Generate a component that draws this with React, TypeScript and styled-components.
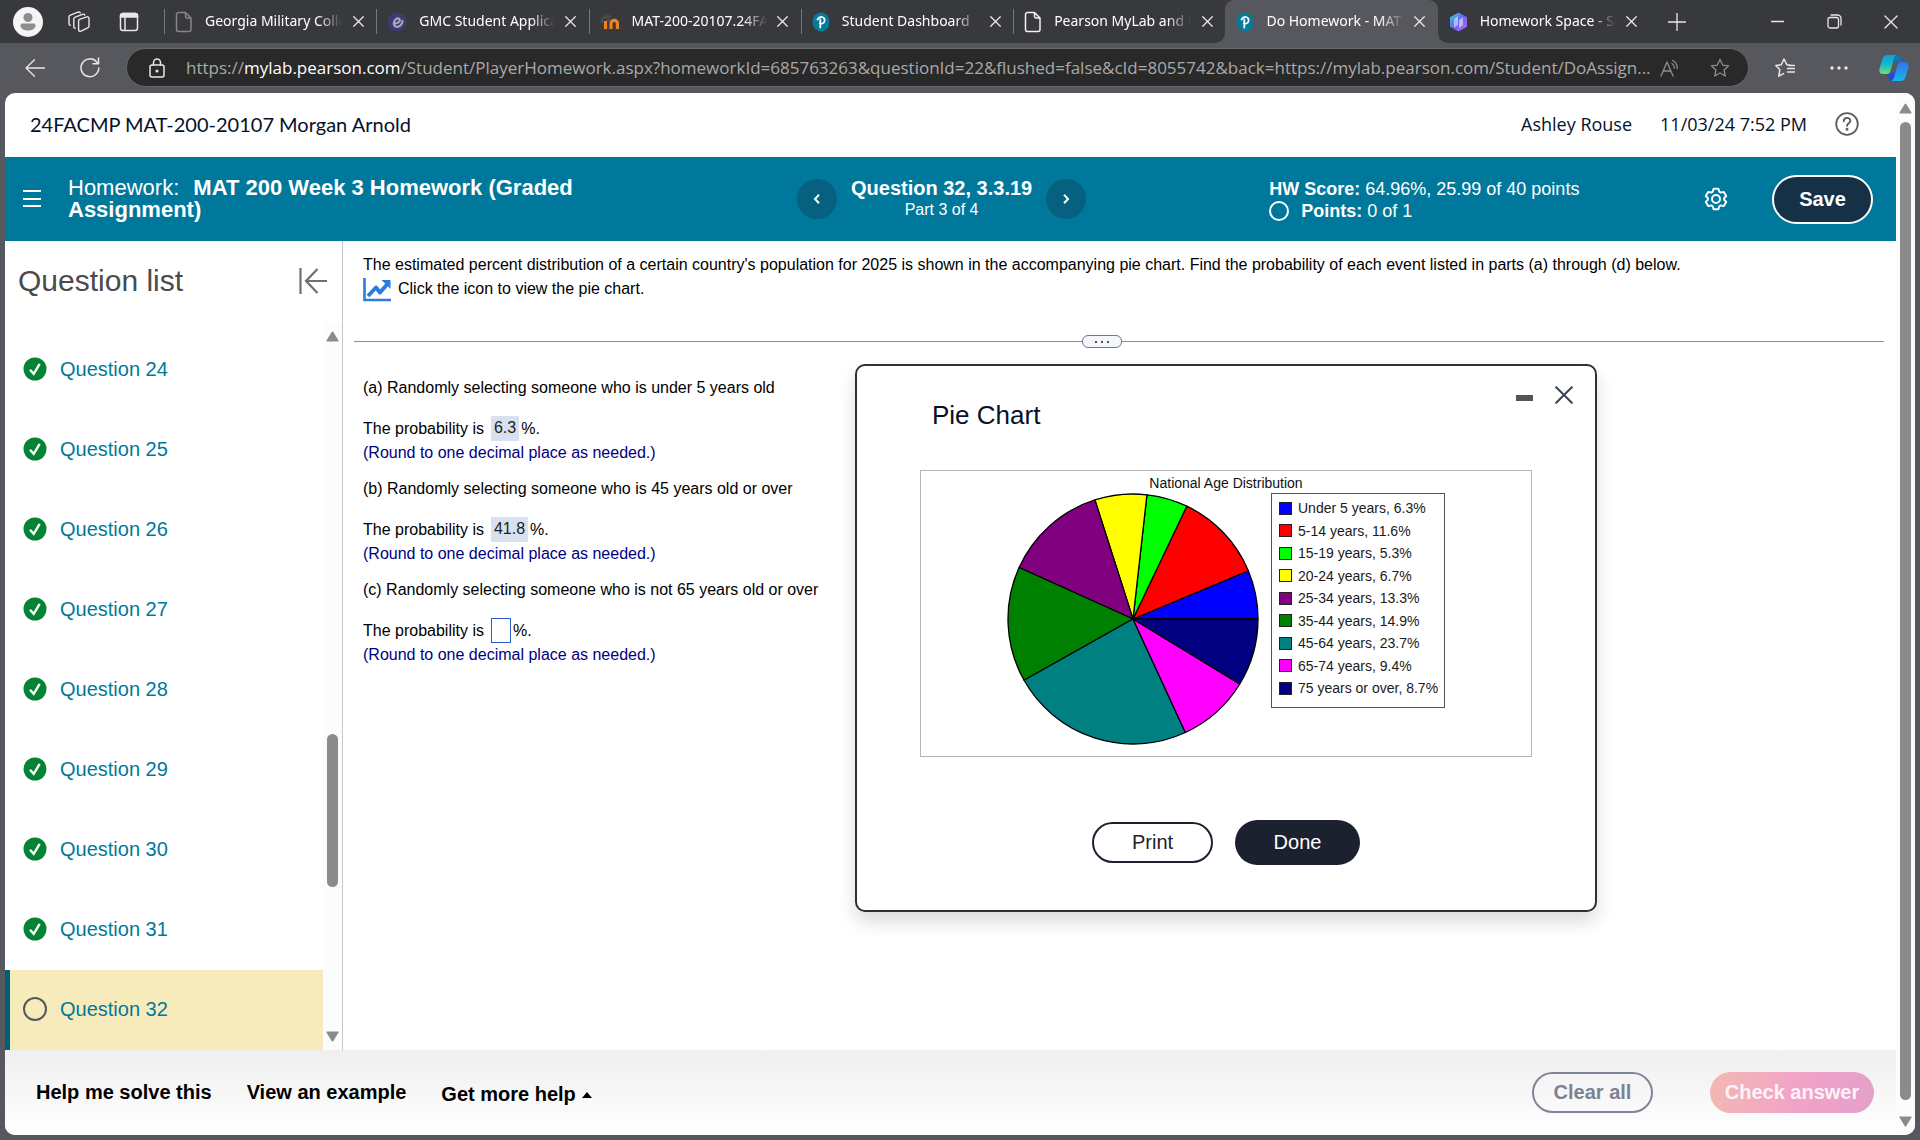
import React from "react";
import styled, { createGlobalStyle, css } from "styled-components";

const sans = `"Liberation Sans", Arial, sans-serif`;
const chromeFont = `"Noto Sans", "Open Sans", sans-serif`;
const textFont = `"Open Sans", "Noto Sans", sans-serif`;
const brandFont = `Lato, "Noto Sans", sans-serif`;

const GlobalStyle = createGlobalStyle`
  *, *::before, *::after { box-sizing: border-box; }
  html, body { margin: 0; background: #57585e; }
  body { font-family: ${sans}; color: #000; overflow: hidden; }
  button { font-family: inherit; border: 0; background: none; padding: 0; cursor: pointer; color: inherit; }
  a { text-decoration: none; color: inherit; }
  ul { list-style: none; margin: 0; padding: 0; }
  h1, h2, p { margin: 0; font-weight: 400; }
  svg { display: block; flex: none; }
`;

/* ---------- browser chrome ---------- */

const Browser = styled.div`
  display: flex;
  flex-direction: column;
  height: 100vh;
  background: #57585e;
  font-family: ${sans};
`;

const TabStrip = styled.header`
  display: flex;
  flex: none;
  height: 43px;
  background: #38393d;
  font-family: ${chromeFont};
  color: #fff;
`;

const TabActions = styled.div`
  display: flex;
  align-items: center;
  gap: 22px;
  width: 164px;
  padding-left: 13px;
`;

const IconButton = styled.button<{ $size?: number; $color?: string }>`
  display: flex;
  flex: none;
  align-items: center;
  justify-content: center;
  width: ${(p) => p.$size ?? 28}px;
  height: ${(p) => p.$size ?? 28}px;
  color: ${(p) => p.$color ?? "#e8e8e8"};
`;

const Tabs = styled.nav`
  display: flex;
  flex: 0 1 1486px;
  min-width: 0;
`;

const Tab = styled.div<{ $active?: boolean; $divider?: boolean }>`
  position: relative;
  display: flex;
  flex: 1 1 0;
  min-width: 0;
  align-items: center;
  padding: 0 8px 0 11px;
  ${(p) =>
    p.$divider &&
    css`
      &::before {
        content: "";
        position: absolute;
        left: 0;
        top: 9px;
        width: 1px;
        height: 25px;
        background: #77787c;
      }
    `}
  ${(p) =>
    p.$active &&
    css`
      background: #57585e;
      border-radius: 9px 9px 0 0;
      &::before,
      &::after {
        content: "";
        position: absolute;
        bottom: 0;
        width: 9px;
        height: 9px;
      }
      &::before {
        right: 100%;
        background: radial-gradient(circle at 0 0, transparent 8px, #57585e 9px);
      }
      &::after {
        left: 100%;
        background: radial-gradient(circle at 100% 0, transparent 8px, #57585e 9px);
      }
    `}
`;

const TabTitle = styled.a`
  flex: 1;
  min-width: 0;
  margin: 0 6px 0 12px;
  padding-bottom: 2px;
  overflow: hidden;
  white-space: nowrap;
  font-size: 14px;
  line-height: 24px;
  mask-image: linear-gradient(to right, #000 calc(100% - 24px), transparent);
`;

const WindowControls = styled.div`
  display: flex;
  flex: 1;
  align-items: center;
  padding: 0 15px 0 13px;
`;

const Spacer = styled.span`
  flex: 1;
`;

const ControlGroup = styled.div`
  display: flex;
  gap: 29px;
`;

const Toolbar = styled.div`
  display: flex;
  flex: none;
  align-items: center;
  height: 50px;
  padding: 0 11px 1px 21px;
  font-family: ${textFont};
`;

const NavButtons = styled.div`
  display: flex;
  gap: 27px;
  width: 105px;
`;

const AddressBar = styled.div`
  display: flex;
  flex: 1;
  min-width: 0;
  align-items: center;
  height: 39px;
  padding: 0 14px 0 16px;
  border: 1px solid #66676b;
  border-radius: 20px;
  background: #292929;
`;

const Url = styled.a`
  flex: 1;
  min-width: 0;
  margin-left: 15px;
  overflow: hidden;
  white-space: nowrap;
  font-size: 17px;
  line-height: 26px;
  color: #a9a9a9;
  b {
    font-weight: 400;
    color: #fff;
  }
`;

const AddressActions = styled.div`
  display: flex;
  gap: 22px;
`;

const ToolbarActions = styled.div`
  display: flex;
  align-items: center;
  gap: 26px;
  margin-left: 22px;
`;

/* ---------- page ---------- */

const Viewport = styled.div`
  display: flex;
  flex: 1;
  min-height: 0;
  margin: 0 5px 5px;
  overflow: hidden;
  border-radius: 10px;
  background: #fff;
`;

const Page = styled.div`
  display: flex;
  flex: 1;
  flex-direction: column;
  min-width: 0;
`;

const ScrollTrack = styled.div<{ $wide?: boolean }>`
  display: flex;
  flex: none;
  flex-direction: column;
  align-items: center;
  width: 19px;
  padding: ${(p) => (p.$wide ? "10px 0 8px" : "9px 0 8px")};
  background: #fcfcfc;
`;

const Thumb = styled.div<{ $before: number; $size: number; $after: number }>`
  display: flex;
  flex: 1;
  flex-direction: column;
  &::before {
    content: "";
    flex: ${(p) => p.$before};
  }
  &::after {
    content: "";
    flex: ${(p) => p.$after};
  }
  span {
    flex: ${(p) => p.$size};
    width: 11px;
    border-radius: 6px;
    background: #8b8b8b;
  }
`;

const CourseBar = styled.div`
  display: flex;
  flex: none;
  align-items: center;
  height: 64px;
  padding: 0 37px 2px 25px;
  font-family: ${brandFont};
  font-size: 20px;
  color: #05112a;
`;

const CourseMeta = styled.div`
  display: flex;
  align-items: center;
  gap: 28px;
  margin-left: auto;
  font-family: ${textFont};
  font-size: 18px;
`;

const Banner = styled.div`
  display: flex;
  flex: none;
  align-items: center;
  height: 84px;
  padding: 0 23px 0 18px;
  background: #00789b;
  color: #fff;
`;

const BannerTitle = styled.h1`
  width: 540px;
  margin: 0 0 0 27px;
  font-size: 22px;
  line-height: 22px;
  b {
    margin-left: 8px;
  }
`;

const Pager = styled.div`
  display: flex;
  align-items: center;
  gap: 14px;
  margin-left: 189px;
`;

const PagerButton = styled.button`
  display: flex;
  align-items: center;
  justify-content: center;
  width: 40px;
  height: 40px;
  border-radius: 50%;
  background: #06607f;
`;

const PagerLabel = styled.div`
  text-align: center;
  font-size: 16px;
  line-height: 22px;
  strong {
    display: block;
    font-size: 20px;
  }
`;

const Scores = styled.div`
  margin-left: 183px;
  padding-top: 2px;
  font-size: 18px;
  line-height: 22px;
  white-space: nowrap;
`;

const PointsRow = styled.div`
  display: flex;
  align-items: center;
  gap: 12px;
`;

const Ring = styled.span<{ $size: number; $color: string }>`
  flex: none;
  width: ${(p) => p.$size}px;
  height: ${(p) => p.$size}px;
  border: 2px solid ${(p) => p.$color};
  border-radius: 50%;
`;

const BannerActions = styled.div`
  display: flex;
  align-items: center;
  gap: 42px;
  margin-left: auto;
`;

const SaveButton = styled.button`
  width: 101px;
  height: 49px;
  border: 2px solid #fff;
  border-radius: 25px;
  background: #163145;
  font-size: 20px;
  font-weight: 700;
  color: #fff;
`;

const Body = styled.div`
  display: flex;
  flex: 1;
  min-height: 0;
`;

const Sidebar = styled.aside`
  display: flex;
  flex: none;
  flex-direction: column;
  width: 338px;
  border-right: 1px solid #c7c7d2;
`;

const SidebarHead = styled.div`
  display: flex;
  flex: none;
  align-items: center;
  justify-content: space-between;
  height: 81px;
  padding: 0 15px 2px 13px;
  h2 {
    font-size: 30px;
    color: #4b4b4b;
  }
`;

const SidebarBody = styled.div`
  display: flex;
  flex: 1;
  min-height: 0;
`;

const QuestionList = styled.ul`
  flex: 1;
  overflow: hidden;
  padding-top: 8px;
`;

const QuestionItem = styled.li<{ $current?: boolean }>`
  border-left: 5px solid ${(p) => (p.$current ? "#006078" : "transparent")};
  background: ${(p) => (p.$current ? "#f8ebbb" : "transparent")};
`;

const QuestionLink = styled.a`
  display: flex;
  align-items: center;
  gap: 13px;
  height: 80px;
  padding: 0 0 2px 13px;
  font-size: 20px;
  color: #00789b;
`;

const Main = styled.main`
  position: relative;
  flex: 1;
  min-width: 0;
  padding: 12px 12px 0 11px;
`;

const Prompt = styled.section`
  height: 82px;
  padding-left: 9px;
  font-size: 16px;
  line-height: 24px;
`;

const ChartLink = styled.button`
  display: flex;
  gap: 7px;
  font-size: 16px;
  line-height: 24px;
`;

const Divider = styled.div`
  display: flex;
  align-items: center;
  height: 13px;
  &::before,
  &::after {
    content: "";
    height: 1px;
    background: #8490a4;
  }
  &::before {
    flex: 728;
  }
  &::after {
    flex: 762;
  }
`;

const Grip = styled.button`
  display: flex;
  align-items: center;
  justify-content: center;
  gap: 4px;
  width: 40px;
  height: 13px;
  border: 1px solid #6a7a8f;
  border-radius: 6px;
  background: #f4f6f9;
  span {
    width: 2px;
    height: 2px;
    background: #4a5568;
  }
`;

const Parts = styled.section`
  display: flex;
  flex-direction: column;
  gap: 12px;
  padding: 28px 0 0 9px;
  font-size: 16px;
  line-height: 24px;
`;

const AnswerRow = styled.div`
  display: flex;
  align-items: center;
  height: 25px;
  margin-top: 16px;
`;

const Answered = styled.output`
  height: 25px;
  margin: 0 2px 0 7px;
  padding: 0 3px;
  background: #d7e1f0;
  line-height: 24px;
  color: #1d1d1d;
`;

const AnswerInput = styled.input`
  width: 20px;
  height: 25px;
  margin: 0 2px 0 7px;
  padding: 0;
  border: 1px solid #2a5fc8;
  background: #fff;
  font: 16px ${sans};
`;

const Hint = styled.p`
  color: #00007f;
`;

/* ---------- dialog ---------- */

const Dialog = styled.section`
  position: absolute;
  left: 512px;
  top: 123px;
  display: flex;
  flex-direction: column;
  width: 742px;
  height: 548px;
  padding: 19px 63px 45px 63px;
  border: 2px solid #2f3133;
  border-radius: 10px;
  background: #fff;
  box-shadow: 0 10px 18px rgba(0, 0, 0, 0.14);
`;

const DialogHead = styled.div`
  display: flex;
  justify-content: space-between;
  height: 85px;
  margin-right: -42px;
  padding-left: 12px;
  h2 {
    margin-top: 15px;
    font-size: 26px;
    line-height: 30px;
    color: #05112a;
  }
`;

const DialogControls = styled.div`
  display: flex;
  gap: 20px;
  button {
    width: 20px;
    height: 20px;
  }
`;

const ChartFrame = styled.figure`
  flex: none;
  height: 287px;
  margin: 0;
  border: 1px solid #b4b4b4;
  font-size: 14px;
  figcaption {
    padding-top: 2px;
    text-align: center;
    line-height: 20px;
    color: #111;
  }
`;

const ChartBody = styled.div`
  display: flex;
  align-items: flex-start;
  gap: 12px;
  padding-left: 86px;
`;

const Legend = styled.ul`
  display: flex;
  flex-direction: column;
  justify-content: space-between;
  width: 174px;
  height: 215px;
  padding: 5px 0 10px 7px;
  border: 1px solid #555;
`;

const LegendItem = styled.li`
  display: flex;
  align-items: center;
  gap: 6px;
  height: 18px;
  line-height: 18px;
  white-space: nowrap;
  color: #1a1a1a;
`;

const Swatch = styled.span<{ $color: string }>`
  width: 13px;
  height: 13px;
  border: 1px solid #222;
  background: ${(p) => p.$color};
`;

const DialogActions = styled.div`
  display: flex;
  align-items: center;
  justify-content: center;
  gap: 22px;
  margin-top: auto;
`;

const PrintButton = styled.button`
  width: 121px;
  height: 41px;
  border: 2px solid #1b212e;
  border-radius: 21px;
  font-size: 20px;
  color: #1b212e;
`;

const DoneButton = styled.button`
  width: 125px;
  height: 45px;
  border-radius: 23px;
  background: #1b212e;
  font-size: 20px;
  color: #fff;
`;

/* ---------- footer ---------- */

const Footer = styled.footer`
  display: flex;
  flex: none;
  align-items: center;
  gap: 35px;
  height: 85px;
  padding: 0 22px 0 31px;
  background: linear-gradient(#efefef, #fff);
  button {
    font-size: 20px;
    font-weight: 700;
  }
`;

const HelpMenu = styled.button`
  display: flex;
  align-items: center;
  gap: 6px;
  padding-top: 4px;
`;

const FooterActions = styled.div`
  display: flex;
  gap: 57px;
  margin-left: auto;
`;

const ClearButton = styled.button`
  width: 121px;
  height: 41px;
  border: 2px solid #7f8796;
  border-radius: 21px;
  color: #7b8392;
`;

const CheckButton = styled.button`
  width: 164px;
  height: 41px;
  border-radius: 21px;
  background: linear-gradient(100deg, #f4b8b2, #f0a2c8 58%, #e4a0ca);
  color: #fdf3f8;
`;

/* ---------- icons ---------- */

const line = {
  fill: "none",
  stroke: "currentColor",
  strokeWidth: 1.3,
  strokeLinecap: "round" as const,
  strokeLinejoin: "round" as const,
};

const CloseIcon = ({ size = 12, width = 1.4 }) => (
  <svg width={size} height={size} viewBox="0 0 12 12" {...line} strokeWidth={width}>
    <path d="M.8.8 11.2 11.2M11.2.8.8 11.2" />
  </svg>
);

const FileIcon = ({ color }: { color: string }) => (
  <svg width="18" height="22" viewBox="0 0 18 22" {...line} stroke={color} strokeWidth={1.5}>
    <path d="M3.5 1.5h7L16 7v11.500a2 2 0 0 1-2 2H3.500a2 2 0 0 1-2-2v-15a2 2 0 0 1 2-2ZM10.500 1.500V5.500A1.500 1.500 0 0 0 12 7h4" />
  </svg>
);

const PearsonIcon = () => (
  <svg width="18" height="20" viewBox="0 0 18 20">
    <ellipse cx="9" cy="10" rx="8.500" ry="9.500" fill="#047a9c" />
    <path
      d="M5.500 7.600C6.500 5.300 9 4.400 10.800 5.200c2.800 1.300 2.300 5.300-.4 6.300-1 .4-2 .3-2.600-.1M8.300 7.300v8.200"
      fill="none"
      stroke="#fff"
      strokeWidth="1.800"
      strokeLinecap="round"
    />
  </svg>
);

const SwirlIcon = () => (
  <svg width="20" height="20" viewBox="0 0 20 20">
    <circle cx="10" cy="10" r="9.500" fill="#3c3b72" />
    <path
      d="M8.500 11.300c2 .2 4.300-1.300 4.300-3.300 0-1.800-2.300-2.300-4-.8-2.800 2.400-2.600 6.800.2 7.500 3.200.7 6.300-2 6.500-5.700"
      fill="none"
      stroke="#a9a6b9"
      strokeWidth="2.200"
      strokeLinecap="round"
    />
  </svg>
);

const MoodleIcon = () => (
  <svg width="20" height="18" viewBox="0 0 20 18" fill="none">
    <path d="M1 4.500 8 1.500l4 2-6 2.500Z" fill="#4d4a48" />
    <path d="M2 5v5" stroke="#6b5a4a" strokeWidth="1.200" />
    <path d="M5.500 16V8M11 16v-5.500a3.200 3.200 0 0 1 6.400 0V16" stroke="#ef8022" strokeWidth="3.200" />
    <path d="M6.500 7.500c1.400-1 2.600-.8 3.400.4" stroke="#7a4a28" strokeWidth="1.600" />
  </svg>
);

const HexIcon = () => (
  <svg width="19" height="20" viewBox="0 0 19 20">
    <defs>
      <linearGradient id="hex" x1="0" y1="0" x2="1" y2="1">
        <stop offset="0" stopColor="#35d3e6" />
        <stop offset=".5" stopColor="#6a62ee" />
        <stop offset="1" stopColor="#c56bf5" />
      </linearGradient>
    </defs>
    <path d="M9.500.5 18 5.200v9.600l-8.500 4.700L1 14.800V5.200Z" fill="url(#hex)" />
    <path d="m5 7 4-3v9l-4 2.500ZM10 8l4-3v8l-4 3Z" fill="#c9d6ff" fillOpacity=".75" />
  </svg>
);

const ProfileIcon = () => (
  <svg width="30" height="30" viewBox="0 0 30 30">
    <circle cx="15" cy="15" r="15" fill="#f5f5f5" />
    <circle cx="15" cy="10.500" r="4.500" fill="#8d8d8d" />
    <path d="M9.500 16.500h11a2 2 0 0 1 2 2c0 3-3.500 5-7.500 5s-7.500-2-7.500-5a2 2 0 0 1 2-2Z" fill="#8d8d8d" />
  </svg>
);

const WorkspacesIcon = () => (
  <svg width="22" height="22" viewBox="0 0 22 22" {...line} strokeWidth={1.4}>
    <path d="m11.500 8.300 7.200-2.500a1.700 1.700 0 0 1 2.300 1.600v7.600c0 .9-.5 1.500-1.300 1.800l-6.700 3.400a1.700 1.700 0 0 1-2.400-1.500v-8.700c0-.8.2-1.400.9-1.700Z" />
    <path d="M7.200 17.300c-1-.1-1.400-.7-1.400-1.500V8c0-.9.5-1.500 1.300-1.800l7.500-2.900c.9-.3 1.800 0 2.200.8" />
    <path d="M2.200 14.300c-.8-.2-1.200-.7-1.200-1.500V6c0-.9.500-1.500 1.300-1.800l7.800-3c.9-.3 1.700 0 2.100.7" />
  </svg>
);

const TabMenuIcon = () => (
  <svg width="20" height="20" viewBox="0 0 20 20" {...line} strokeWidth={1.5}>
    <rect x="1.500" y="1.500" width="17" height="17" rx="2.500" />
    <path d="M1.500 4a2.500 2.500 0 0 1 2.500-2.500h12A2.500 2.500 0 0 1 18.500 4v1h-17Z" fill="currentColor" />
    <path d="M6 6v12" />
  </svg>
);

const RestoreIcon = () => (
  <svg width="15" height="15" viewBox="0 0 15 15" {...line}>
    <rect x="1" y="3.500" width="10.500" height="10.500" rx="2" />
    <path d="M4 1h6.500A3.500 3.500 0 0 1 14 4.500V11" />
  </svg>
);

const StarPath = "m10 1.500 2.600 5.600 6 .7-4.500 4.200 1.200 6-5.300-3-5.300 3 1.200-6L1.400 7.800l6-.7Z";

const CopilotIcon = () => (
  <svg width="30" height="28" viewBox="0 0 30 28">
    <defs>
      <linearGradient id="cpA" x1="0" y1="0" x2="0" y2="1">
        <stop offset="0" stopColor="#0f9fe0" />
        <stop offset=".5" stopColor="#19b8c4" />
        <stop offset="1" stopColor="#6fe07c" />
      </linearGradient>
      <linearGradient id="cpB" x1="0" y1="0" x2="0" y2="1">
        <stop offset="0" stopColor="#2f74e8" />
        <stop offset="1" stopColor="#17b5ee" />
      </linearGradient>
    </defs>
    <path d="M14 1h5c2.500 0 3 2 3.500 4l.8 2.500H19c-2 0-3 1-3.500 3Z" fill="#0a78b4" />
    <path d="M8 20h6l3-4-1.500 9c-.4 1.400-1.300 2-2.500 2-2 0-2.700-1.500-3.200-3.500Z" fill="#2547dd" />
    <path d="M8.500 1H18c-2 .5-2.600 2-3.200 4l-3.300 12c-.6 2-1.700 3-3.700 3H4c-3 0-4.300-2-3.500-5.500L3.500 5C4.200 2.400 5.800 1 8.500 1Z" fill="url(#cpA)" />
    <path d="M21.500 27H12c2-.5 2.600-2 3.200-4l3.300-12c.6-2 1.700-3 3.700-3H26c3 0 4.300 2 3.500 5.500L26.500 23c-.7 2.600-2.300 4-5 4Z" fill="url(#cpB)" />
  </svg>
);

const Arrow = ({ down = false }) => (
  <svg width="13" height="11" viewBox="0 0 13 11" fill="#8b8b8b">
    <path d={down ? "M1 .5h11q1 0 .5 1L7.300 10q-.8 1-1.600 0L.5 1.500Q0 .5 1 .5Z" : "M1 10.500h11q1 0 .5-1L7.300 1q-.8-1-1.600 0L.5 9.500q-.5 1 .5 1Z"} />
  </svg>
);

const CheckIcon = () => (
  <svg width="24" height="24" viewBox="0 0 24 24">
    <circle cx="12" cy="12" r="11.500" fill="#048236" />
    <path d="m7 12.800 3.700 4 6-10" fill="none" stroke="#fff" strokeWidth="2.400" />
  </svg>
);

const GearIcon = () => (
  <svg width="24" height="24" viewBox="0 0 24 24" fill="none" stroke="#fff" strokeWidth="2" strokeLinejoin="round">
    <path d="M9.600 1.800h4.800l.9 2.900 1.500.9 3-.7 2.400 4.100-2.100 2.200v1.600l2.100 2.200-2.400 4.100-3-.7-1.500.9-.9 2.900H9.600l-.9-2.900-1.500-.9-3 .7L1.800 15l2.100-2.200v-1.600L1.800 9l2.400-4.100 3 .7 1.500-.9Z" />
    <circle cx="12" cy="12" r="4" />
  </svg>
);

const ChartIcon = () => (
  <svg width="28" height="25" viewBox="0 0 28 25">
    <path d="M1.500 1v22H28" fill="none" stroke="#2c7be0" strokeWidth="2.600" />
    <path d="m5 19 8-8.500 4 5 7-8" fill="none" stroke="#2c7be0" strokeWidth="4" strokeLinejoin="round" />
    <path d="M18.500 3H27.500V12Z" fill="#2c7be0" />
  </svg>
);

/* ---------- data ---------- */

type TabInfo = { title: string; icon: React.ReactNode; active?: boolean; divider?: boolean };

const tabs: TabInfo[] = [
  { title: "Georgia Military College", icon: <FileIcon color="#85868a" />, divider: true },
  { title: "GMC Student Application", icon: <SwirlIcon />, divider: true },
  { title: "MAT-200-20107.24FACMP", icon: <MoodleIcon />, divider: true },
  { title: "Student Dashboard", icon: <PearsonIcon />, divider: true },
  { title: "Pearson MyLab and Mastering", icon: <FileIcon color="#f2f2f2" />, divider: true },
  { title: "Do Homework - MAT 200", icon: <PearsonIcon />, active: true },
  { title: "Homework Space - Study", icon: <HexIcon /> },
];

const questions = [24, 25, 26, 27, 28, 29, 30, 31, 32];

const slices = [
  { label: "Under 5 years", value: 6.3, color: "#0000ff" },
  { label: "5-14 years", value: 11.6, color: "#ff0000" },
  { label: "15-19 years", value: 5.3, color: "#00ff00" },
  { label: "20-24 years", value: 6.7, color: "#ffff00" },
  { label: "25-34 years", value: 13.3, color: "#800080" },
  { label: "35-44 years", value: 14.9, color: "#008000" },
  { label: "45-64 years", value: 23.7, color: "#008080" },
  { label: "65-74 years", value: 9.4, color: "#ff00ff" },
  { label: "75 years or over", value: 8.7, color: "#000080" },
];

const parts = [
  { id: "a", text: "(a) Randomly selecting someone who is under 5 years old", answer: "6.3" },
  { id: "b", text: "(b) Randomly selecting someone who is 45 years old or over", answer: "41.8" },
  { id: "c", text: "(c) Randomly selecting someone who is not 65 years old or over", answer: "" },
];

function Pie() {
  const c = 126;
  const r = 125;
  const total = slices.reduce((sum, s) => sum + s.value, 0);
  const point = (t: number) => {
    const a = (t / total) * Math.PI * 2;
    return `${c + r * Math.cos(a)} ${c - r * Math.sin(a)}`;
  };
  let start = 0;
  return (
    <svg width="252" height="252" viewBox="0 0 252 252" role="img" aria-label="National Age Distribution">
      {slices.map((s) => {
        const from = start;
        start += s.value;
        return (
          <path
            key={s.label}
            d={`M${c} ${c}L${point(from)}A${r} ${r} 0 0 0 ${point(start)}Z`}
            fill={s.color}
            stroke="#000"
            strokeWidth="1.300"
            strokeLinejoin="round"
          />
        );
      })}
    </svg>
  );
}

export default function App() {
  return (
    <Browser>
      <GlobalStyle />
      <TabStrip>
        <TabActions>
          <IconButton $size={30} aria-label="Profile"><ProfileIcon /></IconButton>
          <IconButton aria-label="Workspaces"><WorkspacesIcon /></IconButton>
          <IconButton aria-label="Tab actions"><TabMenuIcon /></IconButton>
        </TabActions>
        <Tabs>
          {tabs.map((t) => (
            <Tab key={t.title} $active={t.active} $divider={t.divider}>
              {t.icon}
              <TabTitle href="#">{t.title}</TabTitle>
              <IconButton $size={20} aria-label="Close tab"><CloseIcon size={11} /></IconButton>
            </Tab>
          ))}
        </Tabs>
        <WindowControls>
          <IconButton aria-label="New tab">
            <svg width="18" height="18" viewBox="0 0 18 18" {...line}><path d="M9 .5v17M.5 9h17" /></svg>
          </IconButton>
          <Spacer />
          <ControlGroup>
            <IconButton aria-label="Minimize">
              <svg width="13" height="13" viewBox="0 0 13 13" {...line}><path d="M.5 6.500h12" /></svg>
            </IconButton>
            <IconButton aria-label="Restore"><RestoreIcon /></IconButton>
            <IconButton aria-label="Close"><CloseIcon size={14} width={1.1} /></IconButton>
          </ControlGroup>
        </WindowControls>
      </TabStrip>

      <Toolbar>
        <NavButtons>
          <IconButton aria-label="Back">
            <svg width="20" height="18" viewBox="0 0 20 18" {...line}><path d="M9.500.8 1 9l8.500 8.200M1 9h18.500" /></svg>
          </IconButton>
          <IconButton aria-label="Refresh">
            <svg width="20" height="21" viewBox="0 0 20 21" {...line} strokeWidth={1.5}>
              <path d="M18.800 11A8.900 8.900 0 1 1 16.500 4.800L18 6.500M18.500 1v5.700h-5.500" />
            </svg>
          </IconButton>
        </NavButtons>
        <AddressBar>
          <IconButton aria-label="Site information">
            <svg width="16" height="20" viewBox="0 0 16 20" {...line} strokeWidth={1.5}>
              <rect x="1" y="7" width="14" height="12" rx="2" />
              <path d="M4.500 7V4.500a3.500 3.500 0 0 1 7 0V7" />
              <circle cx="8" cy="13" r=".8" fill="currentColor" />
            </svg>
          </IconButton>
          <Url href="#">
            https://<b>mylab.pearson.com</b>/Student/PlayerHomework.aspx?homeworkId=685763263&amp;questionId=22&amp;flushed=false&amp;cId=8055742&amp;back=https://mylab.pearson.com/Student/DoAssign...
          </Url>
          <AddressActions>
            <IconButton $color="#8f8f8f" aria-label="Read aloud">
              <svg width="20" height="18" viewBox="0 0 20 18" {...line}>
                <path d="m1 17 6-14 6 14M3.200 12h7.600M12 4.500c1.600 1 2.300 2.400 2.300 4.500M12.500 1.500c3.200 1.200 4.800 4 4.700 8" />
              </svg>
            </IconButton>
            <IconButton $color="#8f8f8f" aria-label="Add to favorites">
              <svg width="20" height="20" viewBox="0 0 20 20" {...line}><path d={StarPath} /></svg>
            </IconButton>
          </AddressActions>
        </AddressBar>
        <ToolbarActions>
          <IconButton aria-label="Favorites">
            <svg width="20" height="20" viewBox="0 0 20 20" {...line} strokeWidth={1.5}>
              <path d="M16 7.200 11.800 6.700 9 1 6.300 6.700l-5.500.8 4 4-1 6.700 4.700-2.600M12.500 10.500h7M12.500 14h7M14 7.500h5.500" />
            </svg>
          </IconButton>
          <IconButton aria-label="Settings and more">
            <svg width="18" height="4" viewBox="0 0 18 4" fill="currentColor">
              <circle cx="2" cy="2" r="1.700" /><circle cx="9" cy="2" r="1.700" /><circle cx="16" cy="2" r="1.700" />
            </svg>
          </IconButton>
          <IconButton $size={30} aria-label="Copilot"><CopilotIcon /></IconButton>
        </ToolbarActions>
      </Toolbar>

      <Viewport>
        <Page>
          <CourseBar>
            <span>24FACMP MAT-200-20107 Morgan Arnold</span>
            <CourseMeta>
              <span>Ashley Rouse</span>
              <span>11/03/24 7:52 PM</span>
              <IconButton $size={24} $color="#5c5c5c" aria-label="Help">
                <svg width="24" height="24" viewBox="0 0 24 24" {...line} strokeWidth={1.8}>
                  <circle cx="12" cy="12" r="10.800" />
                  <path d="M8.700 9.300c0-4.500 6.900-4.300 6.700-.4-.1 2.400-3.300 2.400-3.400 5" />
                  <circle cx="12" cy="17.300" r=".6" fill="currentColor" />
                </svg>
              </IconButton>
            </CourseMeta>
          </CourseBar>

          <Banner>
            <IconButton $size={18} $color="#fff" aria-label="Menu">
              <svg width="18" height="18" viewBox="0 0 18 18" fill="currentColor">
                <path d="M0 0h18v2H0zM0 8h18v2H0zM0 15h18v2H0z" />
              </svg>
            </IconButton>
            <BannerTitle>Homework: <b>MAT 200 Week 3 Homework (Graded Assignment)</b></BannerTitle>
            <Pager>
              <PagerButton aria-label="Previous question">
                <svg width="8" height="10" viewBox="0 0 8 10" fill="none" stroke="#fff" strokeWidth="2"><path d="M6 .8 2 5l4 4.200" /></svg>
              </PagerButton>
              <PagerLabel><strong>Question 32, 3.3.19</strong>Part 3 of 4</PagerLabel>
              <PagerButton aria-label="Next question">
                <svg width="8" height="10" viewBox="0 0 8 10" fill="none" stroke="#fff" strokeWidth="2"><path d="m2 .8 4 4.200-4 4.200" /></svg>
              </PagerButton>
            </Pager>
            <Scores>
              <div><b>HW Score:</b> 64.96%, 25.99 of 40 points</div>
              <PointsRow><Ring $size={20} $color="#fff" /><span><b>Points:</b> 0 of 1</span></PointsRow>
            </Scores>
            <BannerActions>
              <IconButton aria-label="Settings"><GearIcon /></IconButton>
              <SaveButton>Save</SaveButton>
            </BannerActions>
          </Banner>

          <Body>
            <Sidebar>
              <SidebarHead>
                <h2>Question list</h2>
                <IconButton $color="#6f6f6f" aria-label="Collapse question list">
                  <svg width="28" height="26" viewBox="0 0 28 26" fill="none" stroke="currentColor" strokeWidth="2.200">
                    <path d="M1.500 0v26M18.500 1 7 13l11.500 12M7 13h21" />
                  </svg>
                </IconButton>
              </SidebarHead>
              <SidebarBody>
                <QuestionList>
                  {questions.map((n) => (
                    <QuestionItem key={n} $current={n === 32}>
                      <QuestionLink href="#">
                        {n === 32 ? <Ring $size={24} $color="#54595f" /> : <CheckIcon />}
                        Question {n}
                      </QuestionLink>
                    </QuestionItem>
                  ))}
                </QuestionList>
                <ScrollTrack>
                  <Arrow />
                  <Thumb $before={391} $size={153} $after={144}><span /></Thumb>
                  <Arrow down />
                </ScrollTrack>
              </SidebarBody>
            </Sidebar>

            <Main>
              <Prompt>
                <p>
                  The estimated percent distribution of a certain country's population for 2025 is shown in the accompanying pie chart. Find the probability of each event listed in parts (a) through (d) below.
                </p>
                <ChartLink><ChartIcon />Click the icon to view the pie chart.</ChartLink>
              </Prompt>
              <Divider>
                <Grip aria-label="Resize panels"><span /><span /><span /></Grip>
              </Divider>
              <Parts>
                {parts.map((p) => (
                  <div key={p.id}>
                    <p>{p.text}</p>
                    <AnswerRow>
                      <label htmlFor={`answer-${p.id}`}>The probability is</label>
                      {p.answer ? <Answered id={`answer-${p.id}`}>{p.answer}</Answered> : <AnswerInput id={`answer-${p.id}`} />}
                      <span>%.</span>
                    </AnswerRow>
                    <Hint>(Round to one decimal place as needed.)</Hint>
                  </div>
                ))}
              </Parts>

              <Dialog role="dialog" aria-labelledby="pie-title">
                <DialogHead>
                  <h2 id="pie-title">Pie Chart</h2>
                  <DialogControls>
                    <IconButton $color="#555" aria-label="Minimize dialog">
                      <svg width="17" height="20" viewBox="0 0 17 20"><path d="M0 10h17v6H0z" fill="currentColor" /></svg>
                    </IconButton>
                    <IconButton $color="#3c4856" aria-label="Close dialog"><CloseIcon size={18} width={1.4} /></IconButton>
                  </DialogControls>
                </DialogHead>
                <ChartFrame>
                  <figcaption>National Age Distribution</figcaption>
                  <ChartBody>
                    <Pie />
                    <Legend>
                      {slices.map((s) => (
                        <LegendItem key={s.label}><Swatch $color={s.color} />{`${s.label}, ${s.value}%`}</LegendItem>
                      ))}
                    </Legend>
                  </ChartBody>
                </ChartFrame>
                <DialogActions>
                  <PrintButton>Print</PrintButton>
                  <DoneButton>Done</DoneButton>
                </DialogActions>
              </Dialog>
            </Main>
          </Body>

          <Footer>
            <button>Help me solve this</button>
            <button>View an example</button>
            <HelpMenu>
              Get more help
              <svg width="10" height="6" viewBox="0 0 10 6"><path d="M5 0l5 6H0z" /></svg>
            </HelpMenu>
            <FooterActions>
              <ClearButton>Clear all</ClearButton>
              <CheckButton>Check answer</CheckButton>
            </FooterActions>
          </Footer>
        </Page>
        <ScrollTrack $wide>
          <Arrow />
          <Thumb $before={8} $size={979} $after={16}><span /></Thumb>
          <Arrow down />
        </ScrollTrack>
      </Viewport>
    </Browser>
  );
}
